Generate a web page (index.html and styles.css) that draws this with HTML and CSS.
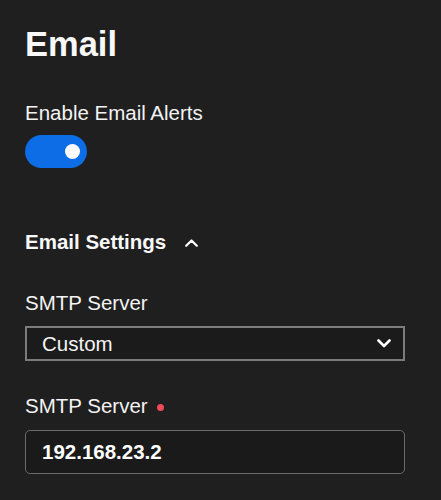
FILE: index.html
```html
<!DOCTYPE html>
<html lang="en">
<head>
<meta charset="utf-8">
<title>Email</title>
<link rel="stylesheet" href="styles.css">
</head>
<body>
<main class="panel">
  <h1 class="title">Email</h1>

  <div class="field field-toggle">
    <div class="label">Enable Email Alerts</div>
    <div class="toggle" role="switch" aria-checked="true"><span class="knob"></span></div>
  </div>

  <div class="section-head">
    <span class="section-title">Email Settings</span>
    <svg class="chev-up" width="13" height="8" viewBox="0 0 13 8" aria-hidden="true">
      <path d="M1.2 6.8 L6.5 1.5 L11.8 6.8" fill="none" stroke="#ffffff" stroke-width="2.2" stroke-linecap="round" stroke-linejoin="round"/>
    </svg>
  </div>

  <div class="field field-select">
    <div class="label">SMTP Server</div>
    <div class="select" role="combobox">
      <span class="select-value">Custom</span>
      <svg class="chev-down" width="14" height="9" viewBox="0 0 14 9" aria-hidden="true">
        <path d="M1.5 1.5 L7 7 L12.5 1.5" fill="none" stroke="#ffffff" stroke-width="2.6" stroke-linecap="round" stroke-linejoin="round"/>
      </svg>
    </div>
  </div>

  <div class="field field-input">
    <div class="label">SMTP Server<span class="required"></span></div>
    <input class="text-input" type="text" value="192.168.23.2">
  </div>
</main>
</body>
</html>
```

FILE: styles.css
```css
html, body {
  margin: 0;
  padding: 0;
  background: #1f1f1f;
}

body {
  font-family: "Liberation Sans", Arial, Helvetica, sans-serif;
  color: #f7f7f7;
}

.panel {
  padding: 24px 36px 0 25px;
  display: flex;
  flex-direction: column;
}

.title {
  margin: 0;
  font-size: 34.5px;
  line-height: 40px;
  font-weight: 700;
  color: #f8f8f8;
}

.field {
  display: flex;
  flex-direction: column;
}

.label {
  font-size: 20.5px;
  line-height: 24px;
  color: #f3f3f3;
  display: flex;
  align-items: center;
}

.field-toggle {
  margin-top: 37px;
  gap: 10px;
}

.toggle {
  width: 62px;
  height: 33px;
  border-radius: 17px;
  background: #0c6de6;
  display: flex;
  align-items: center;
  justify-content: flex-end;
  padding-right: 7px;
  box-sizing: border-box;
}

.knob {
  width: 15px;
  height: 15px;
  border-radius: 50%;
  background: #ffffff;
}

.section-head {
  margin-top: 62px;
  display: flex;
  align-items: center;
  gap: 19px;
  height: 24px;
}

.section-title {
  font-size: 20.5px;
  line-height: 24px;
  font-weight: 700;
  color: #f8f8f8;
}

.chev-up {
  display: block;
  margin-top: 1px;
}

.field-select {
  margin-top: 37px;
  gap: 11px;
}

.select {
  height: 35px;
  border: 2px solid #7b7b7b;
  background: #1b1b1b;
  box-sizing: border-box;
  display: flex;
  align-items: center;
  justify-content: space-between;
  padding: 0 12px 0 15px;
}

.select-value {
  font-size: 20.5px;
  line-height: 24px;
  color: #f5f5f5;
}

.chev-down {
  display: block;
}

.field-input {
  margin-top: 33px;
  gap: 12px;
}

.required {
  width: 7px;
  height: 7px;
  border-radius: 50%;
  background: #ec4b57;
  margin-left: 9px;
  margin-top: 2px;
}

.text-input {
  height: 44px;
  box-sizing: border-box;
  border: 1.5px solid #6a6a6a;
  border-radius: 5px;
  background: #1a1a1a;
  padding: 0 15px 0 16px;
  font-family: "Liberation Sans", Arial, Helvetica, sans-serif;
  font-size: 20.5px;
  font-weight: 700;
  color: #ffffff;
  outline: none;
  width: 100%;
}
```
